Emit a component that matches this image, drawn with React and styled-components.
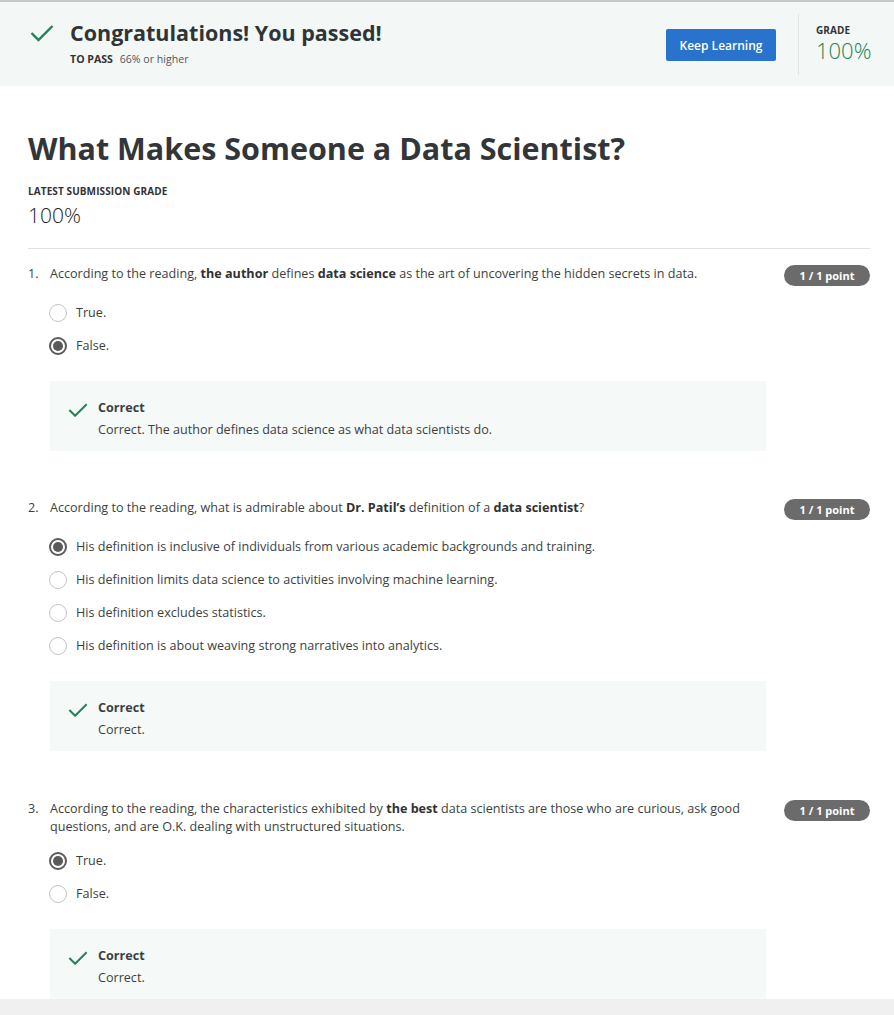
import React from "react";
import styled, { createGlobalStyle } from "styled-components";

const GlobalStyle = createGlobalStyle`
  html, body {
    margin: 0;
    padding: 0;
    background: #ffffff;
    font-family: "Open Sans", "Liberation Sans", sans-serif;
    color: #373a3c;
  }
`;

const Page = styled.div`
  border-top: 2px solid #c8c8c8;
  height: 997px;
  overflow: hidden;
`;

const Banner = styled.header`
  display: flex;
  align-items: center;
  height: 84px;
  background: #f3f8f7;
  padding: 0 24px 0 30px;
  box-sizing: border-box;
`;

const BannerMain = styled.div`
  display: flex;
  align-items: flex-start;
  gap: 16px;
  flex: 1;
  margin-top: -4px;
`;

const BannerTitle = styled.h2`
  margin: 0;
  font-size: 21.5px;
  font-weight: 700;
  line-height: 30px;
  color: #2f3437;
`;

const PassLine = styled.div`
  font-size: 10.6px;
  color: #555;
  margin-top: 4px;
  b {
    font-weight: 700;
    color: #333;
    margin-right: 4px;
  }
`;

const PrimaryButton = styled.button`
  background: #2a73cc;
  color: #fff;
  border: none;
  border-radius: 2px;
  font-family: inherit;
  font-size: 12px;
  font-weight: 600;
  width: 110px;
  height: 32px;
  margin-top: 2px;
  cursor: pointer;
`;

const Divider = styled.div`
  width: 1px;
  align-self: stretch;
  margin: 12px 17px 11px 22px;
  background: #e0e4e4;
`;

const GradeBlock = styled.div`
  width: 54px;
  margin-top: -4px;
`;

const SmallCaps = styled.div`
  font-size: 10px;
  font-weight: 700;
  color: #333;
  text-transform: uppercase;
  letter-spacing: 0.1px;
  line-height: 14px;
`;

const GradeValue = styled.div`
  font-size: ${(p) => p.size || 22}px;
  font-weight: 300;
  color: ${(p) => p.color || "#1f8354"};
  line-height: 1;
  margin-top: ${(p) => p.gap || 2}px;
  white-space: nowrap;
`;

const Content = styled.main`
  padding: 0 24px 0 28px;
`;

const Title = styled.h1`
  margin: 42px 0 0;
  font-size: 30.5px;
  font-weight: 700;
  line-height: 40px;
  color: #333639;
`;

const LatestGrade = styled.div`
  margin-top: 16px;
  padding-bottom: 22px;
  border-bottom: 1px solid #e1e1e1;
`;

const QuestionList = styled.ol`
  list-style: none;
  margin: 0;
  padding: 0;
`;

const Question = styled.li`
  padding-top: ${(p) => p.top}px;
`;

const QuestionHead = styled.div`
  display: flex;
  align-items: flex-start;
  font-size: 12.6px;
  line-height: 18px;
  color: #3c3f41;
`;

const QNum = styled.span`
  width: 22px;
  flex-shrink: 0;
`;

const QText = styled.div`
  flex: 1;
  padding-right: 40px;
  b {
    font-weight: 700;
    color: #2f3235;
  }
`;

const Badge = styled.span`
  flex-shrink: 0;
  background: #6b6b6b;
  color: #fff;
  font-size: 11px;
  font-weight: 700;
  border-radius: 11px;
  width: 86px;
  height: 21px;
  line-height: 21px;
  text-align: center;
  margin: 0 0 2px;
`;

const Options = styled.div`
  display: flex;
  flex-direction: column;
  gap: 14px;
  margin: 15px 0 0 21px;
`;

const Option = styled.label`
  display: flex;
  align-items: center;
  gap: 9px;
  font-size: 12.6px;
  color: #3c3f41;
  height: 19px;
`;

const Radio = styled.span`
  width: 18px;
  height: 18px;
  border-radius: 50%;
  box-sizing: border-box;
  border: ${(p) => (p.checked ? "2px solid #5a5a5a" : "1.5px solid #c4c4c4")};
  display: flex;
  align-items: center;
  justify-content: center;
  &::after {
    content: "";
    width: 10px;
    height: 10px;
    border-radius: 50%;
    background: ${(p) => (p.checked ? "#5a5a5a" : "transparent")};
  }
`;

const Feedback = styled.div`
  display: flex;
  gap: 10px;
  margin: 26px 0 0 22px;
  width: 716px;
  height: 70px;
  box-sizing: border-box;
  padding: 16px 18px;
  background: #f5f9f8;
`;

const FeedbackText = styled.div`
  font-size: 12.6px;
  line-height: 22px;
  color: #3c3f41;
  b {
    font-weight: 700;
  }
`;

const BottomBar = styled.div`
  position: fixed;
  left: 0;
  right: 0;
  bottom: 0;
  height: 16px;
  background: #f0f0f0;
`;

const Check = ({ w = 20, h = 14 }) => (
  <svg width={w} height={h} viewBox="0 0 24 17" fill="none">
    <path d="M1.5 8.5 L8.5 15.5 L22.5 1.5" stroke="#1f8354" strokeWidth="2.4" />
  </svg>
);

const questions = [
  {
    top: 16,
    text: (
      <>
        According to the reading, <b>the author</b> defines <b>data science</b> as the art of uncovering the hidden secrets in data.
      </>
    ),
    options: ["True.", "False."],
    picked: 1,
    feedback: "Correct. The author defines data science as what data scientists do.",
  },
  {
    top: 48,
    text: (
      <>
        According to the reading, what is admirable about <b>Dr. Patil’s</b> definition of a <b>data scientist</b>?
      </>
    ),
    options: [
      "His definition is inclusive of individuals from various academic backgrounds and training.",
      "His definition limits data science to activities involving machine learning.",
      "His definition excludes statistics.",
      "His definition is about weaving strong narratives into analytics.",
    ],
    picked: 0,
    feedback: "Correct.",
  },
  {
    top: 49,
    text: (
      <>
        According to the reading, the characteristics exhibited by <b>the best</b> data scientists are those who are curious, ask good questions, and are O.K. dealing with unstructured situations.
      </>
    ),
    options: ["True.", "False."],
    picked: 0,
    feedback: "Correct.",
  },
];

export default function App() {
  return (
    <>
      <GlobalStyle />
      <Page>
        <Banner>
          <BannerMain>
            <div style={{ paddingTop: 6 }}>
              <Check w={24} h={18} />
            </div>
            <div>
              <BannerTitle>Congratulations! You passed!</BannerTitle>
              <PassLine>
                <b>TO PASS</b> 66% or higher
              </PassLine>
            </div>
          </BannerMain>
          <PrimaryButton>Keep Learning</PrimaryButton>
          <Divider />
          <GradeBlock>
            <SmallCaps>Grade</SmallCaps>
            <GradeValue>100%</GradeValue>
          </GradeBlock>
        </Banner>

        <Content>
          <Title>What Makes Someone a Data Scientist?</Title>
          <LatestGrade>
            <SmallCaps>Latest Submission Grade</SmallCaps>
            <GradeValue size={21} color="#222" gap={7}>
              100%
            </GradeValue>
          </LatestGrade>

          <QuestionList>
            {questions.map((q, i) => (
              <Question key={i} top={q.top}>
                <QuestionHead>
                  <QNum>{i + 1}.</QNum>
                  <QText>{q.text}</QText>
                  <Badge>1 / 1 point</Badge>
                </QuestionHead>
                <Options>
                  {q.options.map((o, j) => (
                    <Option key={j}>
                      <Radio checked={j === q.picked} />
                      {o}
                    </Option>
                  ))}
                </Options>
                <Feedback>
                  <div style={{ paddingTop: 3 }}>
                    <Check />
                  </div>
                  <FeedbackText>
                    <b>Correct</b>
                    <div>{q.feedback}</div>
                  </FeedbackText>
                </Feedback>
              </Question>
            ))}
          </QuestionList>
        </Content>
      </Page>
      <BottomBar />
    </>
  );
}
